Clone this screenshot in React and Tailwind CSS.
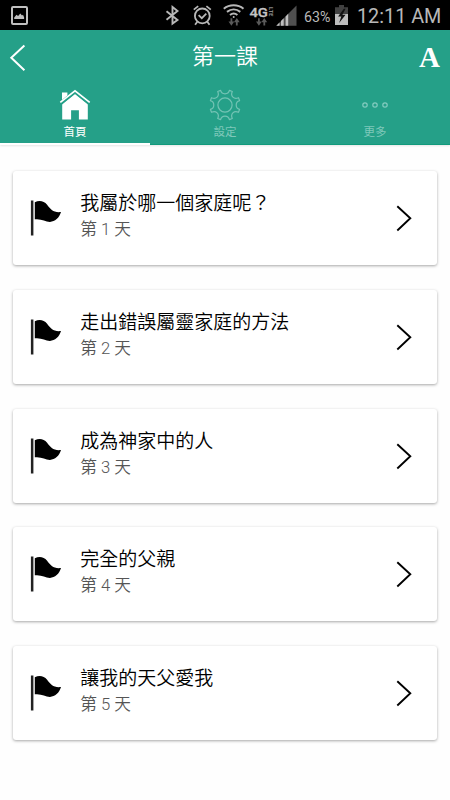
const lessons = [
  { title: '我屬於哪一個家庭呢？', day: '第 1 天' },
  { title: '走出錯誤屬靈家庭的方法', day: '第 2 天' },
  { title: '成為神家中的人', day: '第 3 天' },
  { title: '完全的父親', day: '第 4 天' },
  { title: '讓我的天父愛我', day: '第 5 天' },
];

function DataArrows({ x }) {
  return (
    <g fill="#5a5a5a" stroke="none">
      <path d={`M${x} 21.5h2v-3.2h1.8v3.2h2L${x + 2.9} 25.8z`} />
      <path d={`M${x + 5.4} 22.3l2.9-4.2 2.9 4.2h-2v3.3h-1.8v-3.3z`} />
    </g>
  );
}

function StatusBar() {
  return (
    <div className="flex h-[30px] shrink-0 items-center bg-black text-[#b8b8b8]">
      <svg className="ml-[11px] w-[17px] shrink-0" height="30" viewBox="11 0 17 30">
        <rect x="12" y="7" width="15" height="17" rx="1" fill="none" stroke="#c0c0c0" strokeWidth="2" />
        <path d="M14.2 19v-1.6l2.3-2.7 1.6 1.4 2.2-2.7 1.7 2 1-.6 1.1 2.5V19z" fill="#c0c0c0" />
      </svg>
      <svg className="ml-[137px] w-[15px] shrink-0" height="30" viewBox="165 0 15 30" fill="none" stroke="#b8b8b8" strokeWidth="1.9">
        <path d="M166.5 11.2l11 8.8-5 3.6V7l5 4-11 8.8" />
      </svg>
      <svg className="ml-[13px] w-[20px] shrink-0" height="30" viewBox="193 0 20 30" fill="none" stroke="#b8b8b8" strokeWidth="1.8">
        <circle cx="202.3" cy="15.9" r="7.4" />
        <path d="M198.6 15.2l3.2 3 4.5-4.6M193.8 9.6l4.4-3.5M210.8 9.6l-4.4-3.5M197.3 21.7l-2.2 3M207.3 21.7l2.2 3" />
      </svg>
      <svg className="ml-[10px] w-[22px] shrink-0" height="30" viewBox="223 0 22 30" fill="none" stroke="#b8b8b8" strokeWidth="2">
        <path d="M223.8 8.7c5.6-4.7 14.1-4.7 19.7 0M227 11.9c4-3.2 9.3-3.2 13.3 0M230 15c2.4-1.9 5-1.9 7.4 0" />
        <circle cx="233.7" cy="17" r="1" fill="#b8b8b8" stroke="none" />
        <DataArrows x={228.5} />
      </svg>
      <svg className="ml-[4px] w-[25px] shrink-0" height="30" viewBox="249 0 25 30">
        <text x="249.4" y="16.6" fontSize="13" fontWeight="500" textLength="18.5" lengthAdjust="spacingAndGlyphs" fill="#c4c4c4" stroke="#c4c4c4" strokeWidth=".3" fontFamily="Roboto, sans-serif">4G</text>
        <text transform="translate(268.6 7) rotate(90)" fontSize="5.6" fontWeight="bold" textLength="9.5" fill="#888" fontFamily="Roboto, sans-serif">LTE</text>
        <DataArrows x={256} />
      </svg>
      <svg className="ml-[2px] w-[21px] shrink-0" height="30" viewBox="276 0 21 30">
        <path d="M276.3 25.8L296.5 5.5v20.3z" fill="#505050" />
        <path d="M276.3 25.8l3.2-3.2v3.2zM281 25.8v-4.8l2.7-2.7v7.5zM285.6 25.8v-9.4l2.6-2.6v12z" fill="#c0c0c0" />
      </svg>
      <span className="ml-[7px] w-[30px] shrink-0 pt-[4px] font-['Roboto',sans-serif] text-[14.2px] leading-none whitespace-nowrap">63%</span>
      <svg className="ml-px w-[14px] shrink-0" height="30" viewBox="335 0 14 30">
        <path d="M339 5h5v2.3h4V25h-13V7.3h4z" fill="#414141" />
        <path d="M335 14h13v11h-13z" fill="#bdbdbd" />
        <path d="M343.8 8.8l-5.7 7.8h3.2l-2.2 6.3 6.5-8.1h-3.2l3.2-6z" fill="#111" />
      </svg>
      <span className="ml-[8px] pt-[3px] font-['Roboto',sans-serif] text-[19.8px] leading-none whitespace-nowrap">12:11 AM</span>
    </div>
  );
}

function Tab({ label, active, children }) {
  return (
    <div className={`flex w-[150px] flex-col items-center pt-[5px] ${active ? 'border-b-2 border-white text-white' : 'border-b border-[#119a7c] text-[#7fc8ba]'}`}>
      <svg width="32" height="32" viewBox="0 0 32 32">{children}</svg>
      <span className="mt-[4px] text-[11.5px] leading-[14px]">{label}</span>
    </div>
  );
}

function Header() {
  return (
    <header className="flex h-[115px] shrink-0 flex-col bg-[#25a088] text-white shadow-[0_1px_2px_rgba(0,0,0,0.1)]">
      <div className="flex h-[54px] items-center justify-between">
        <svg className="ml-[8px]" width="22" height="32" viewBox="0 0 22 32" fill="none" stroke="white" strokeWidth="2">
          <path d="M16.4 4.6L3.3 16.8l13.1 12.4" />
        </svg>
        <h1 className="pl-[1px] text-[22px] leading-[32px] font-[350]">第一課</h1>
        <span className="mr-[10px] pb-px font-['Liberation_Serif',serif] text-[29px] leading-[32px] font-bold">A</span>
      </div>
      <nav className="flex h-[61px]">
        <Tab label="首頁" active>
          <path d="M3 11V3.4h5.4v3.2z" fill="white" />
          <path d="M3.2 15L16 4.6 28.8 15v15.6H19.9V21.2h-7.8v9.4H3.2z" fill="white" />
          <path d="M2.6 15L16 4.2 29.4 15" fill="none" stroke="#25a088" strokeWidth="1.3" />
          <path d="M1.3 13.4L16 1.8l14.7 11.6" fill="none" stroke="white" strokeWidth="1.7" />
        </Tab>
        <Tab label="設定">
          <g fill="none" stroke="#73c3b4" strokeWidth="1.2" strokeLinejoin="round">
            <circle cx="16" cy="16" r="7.1" />
            <path d="M8.7 2.5L11.6 1.4Q12.5 4.8 16 4.8T20.4 1.4L23.3 2.5Q21.7 5.9 23.9 8.1T29.5 8.7L30.6 11.6Q27.2 12.5 27.2 16T30.6 20.4L29.5 23.3Q26.1 21.7 23.9 23.9T23.3 29.5L20.4 30.6Q19.5 27.2 16 27.2T11.6 30.6L8.7 29.5Q10.3 26.1 8.1 23.9T2.5 23.3L1.4 20.4Q4.8 19.5 4.8 16T1.4 11.6L2.5 8.7Q5.9 10.3 8.1 8.1T8.7 2.5Z" />
          </g>
        </Tab>
        <Tab label="更多">
          <g fill="none" stroke="#83cbbf" strokeWidth="1.2">
            <circle cx="6" cy="16" r="2.2" />
            <circle cx="16" cy="16" r="2.2" />
            <circle cx="26" cy="16" r="2.2" />
          </g>
        </Tab>
      </nav>
    </header>
  );
}

function LessonCard({ title, day }) {
  return (
    <li className="flex h-[94px] shrink-0 items-center rounded-[3px] bg-white shadow-[0_1px_3px_rgba(0,0,0,0.35)]">
      <svg className="ml-[17.5px] w-[32px] shrink-0" height="36" viewBox="0 0 32 36">
        <path d="M.9 .5h2.5v35H.9z" fill="#222" />
        <path d="M4.8 2.2C9.5 0 14 1 17.1 4.8c3.2 4.4 6.6 8.3 13.9 7.3-1.7 5.9-6.2 9.9-11.2 9.8-4.4-.2-8.6-3.5-15-2.6z" fill="#000" />
      </svg>
      <div className="ml-[18px] flex flex-1 flex-col pb-[2px] font-[350]">
        <span className="text-[19px] leading-[26px] text-black">{title}</span>
        <span className="text-[16.7px] leading-[26px] text-[#555]">{day}</span>
      </div>
      <svg className="mr-[23.3px] w-[20px] shrink-0" height="30" viewBox="0 0 20 30" fill="none" stroke="black" strokeWidth="1.9">
        <path d="M3.3 3.2l13 12.1-13 12.2" />
      </svg>
    </li>
  );
}

export default function App() {
  return (
    <div className="flex h-[800px] w-[450px] flex-col overflow-hidden bg-[#fefefe] font-['Roboto','Noto_Sans_CJK_TC',sans-serif]">
      <StatusBar />
      <Header />
      <ul className="flex flex-col gap-[24.75px] px-[12.7px] pt-[26.2px]">
        {lessons.map((lesson) => (
          <LessonCard key={lesson.day} {...lesson} />
        ))}
      </ul>
    </div>
  );
}
